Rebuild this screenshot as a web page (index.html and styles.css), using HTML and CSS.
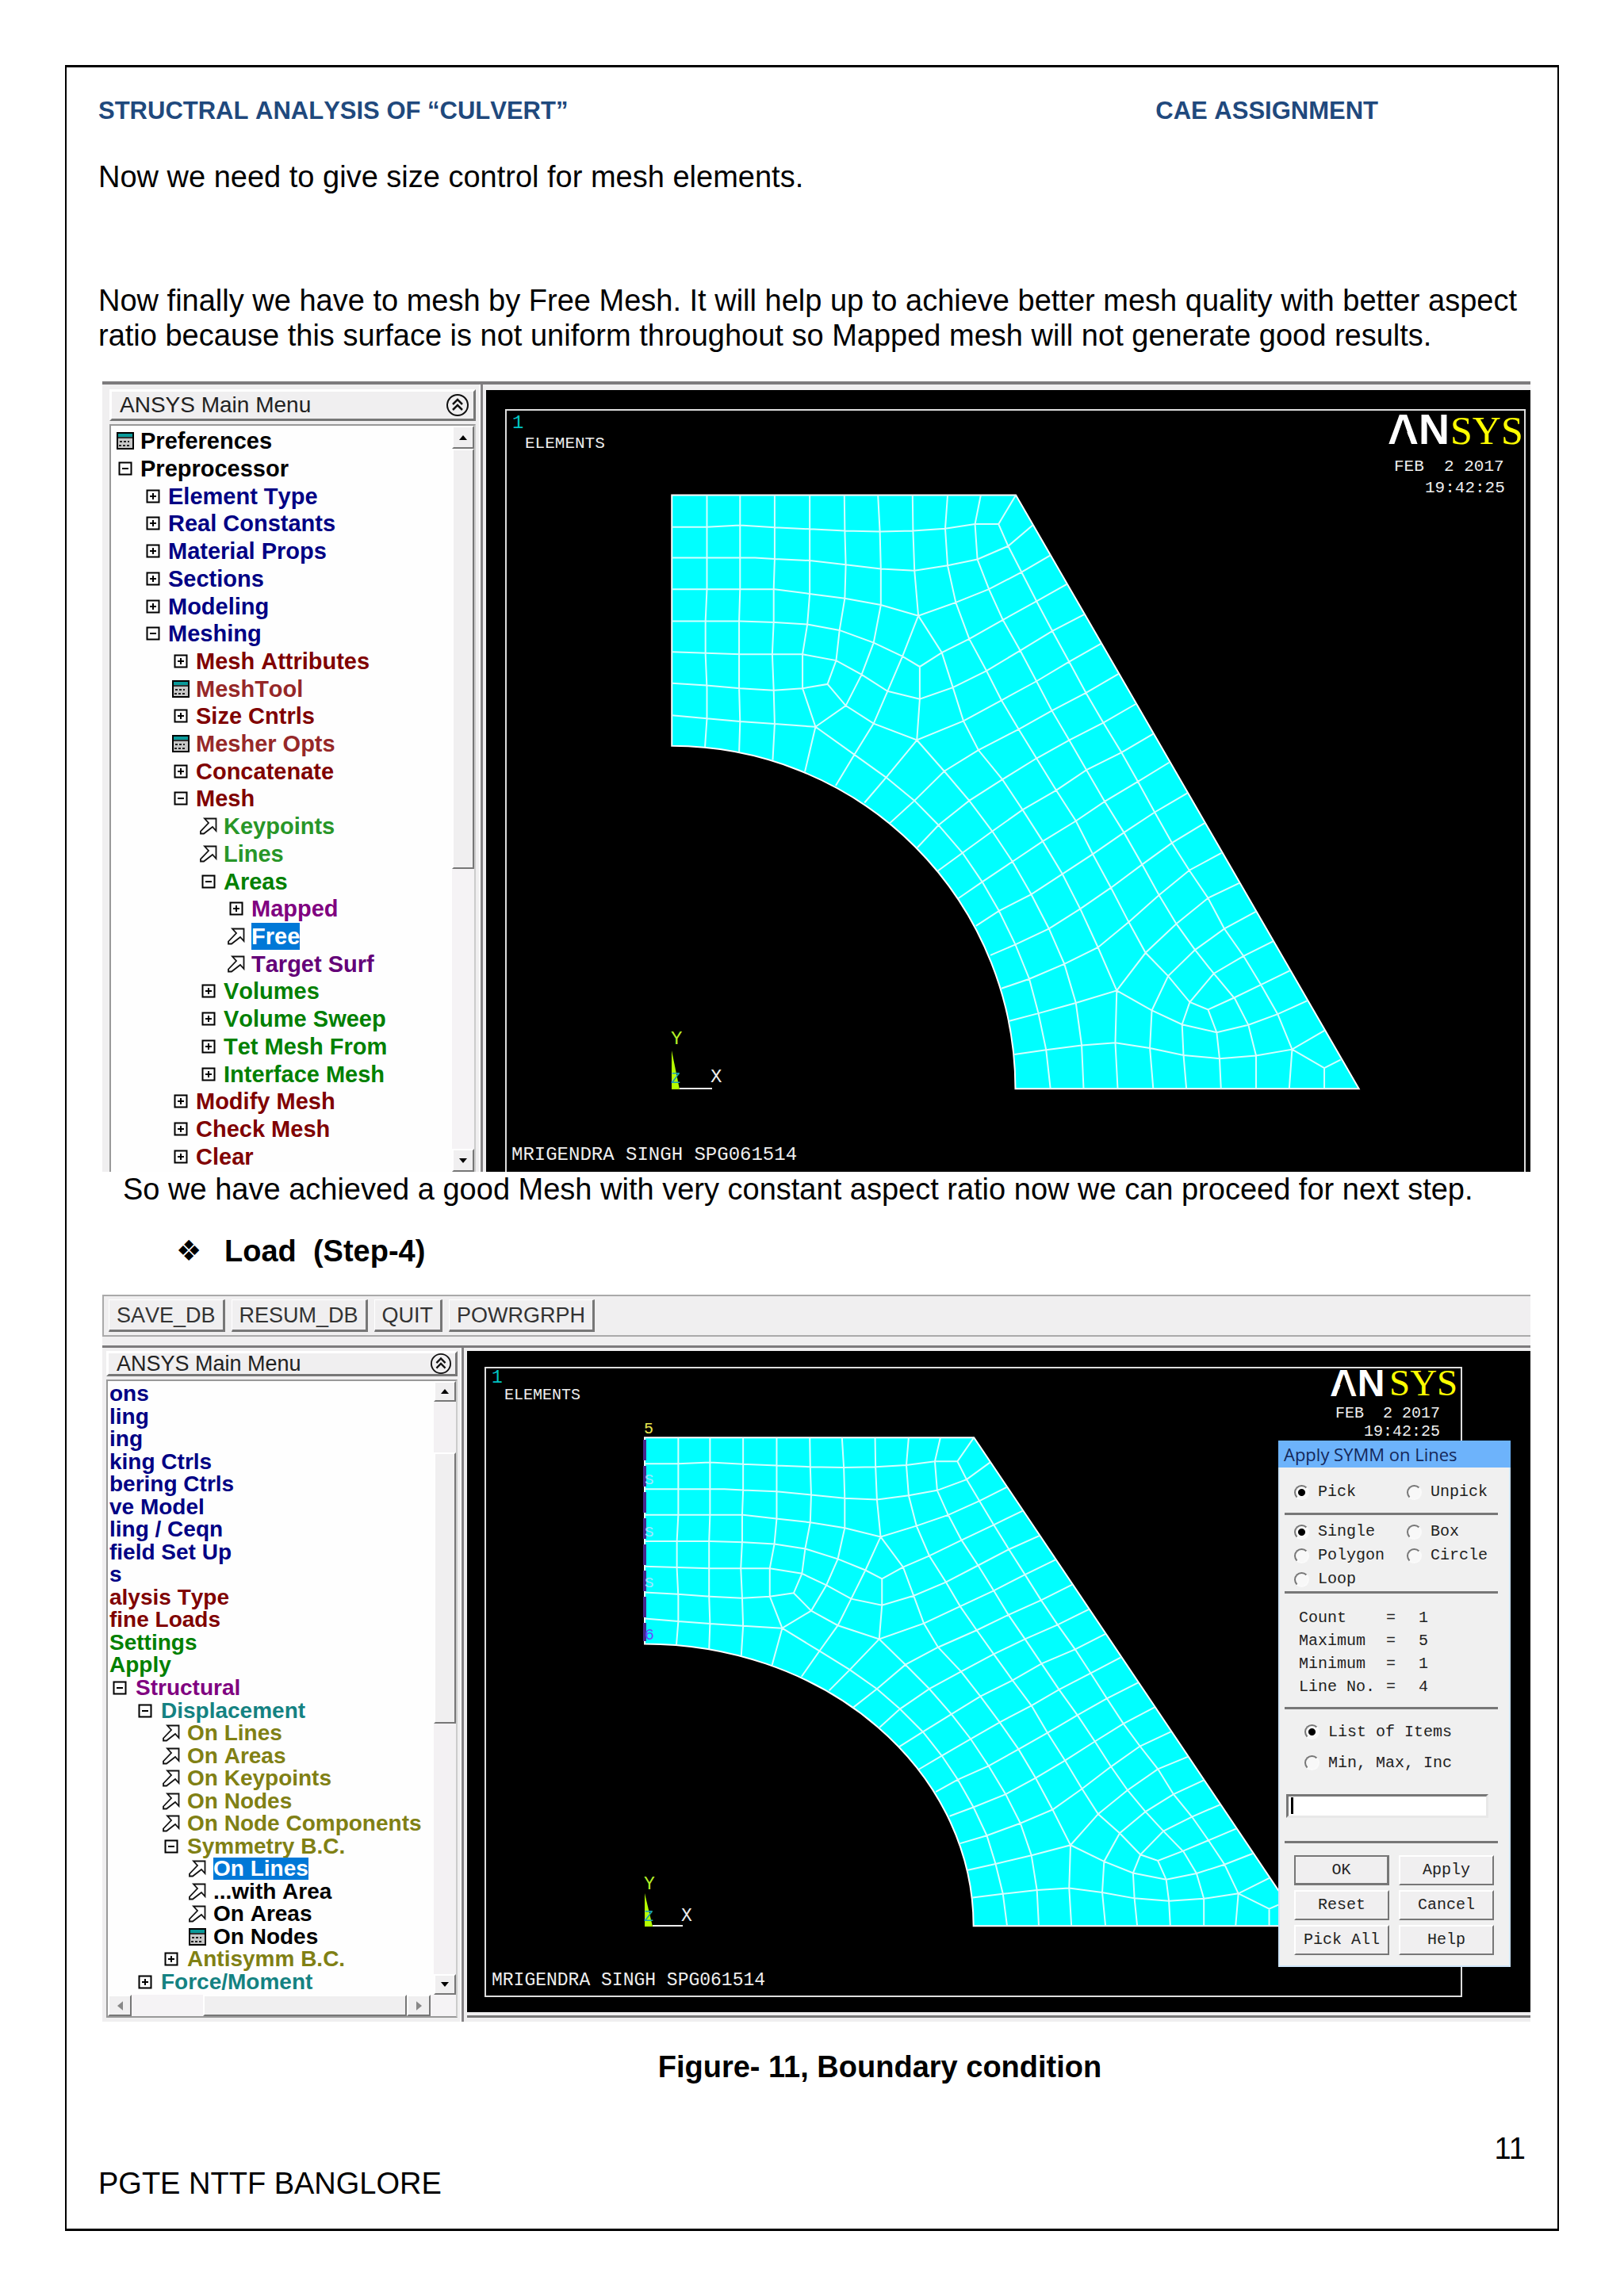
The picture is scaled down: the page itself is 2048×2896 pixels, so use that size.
FILE: index.html
```html
<!DOCTYPE html>
<html lang="en">
<head>
<meta charset="utf-8">
<title>Structral Analysis of “Culvert”</title>
<link rel="stylesheet" href="styles.css">
</head>
<body>
<svg class="sprite" width="0" height="0" aria-hidden="true">
  <symbol id="plus" viewBox="0 0 22 22"><path d="M3.500 3.500h15v15h-15zM7 11h8M11 7v8" fill="none" stroke="#000" stroke-width="2"/></symbol>
  <symbol id="minus" viewBox="0 0 22 22"><path d="M3.500 3.500h15v15h-15zM7 11h8" fill="none" stroke="#000" stroke-width="2"/></symbol>
  <symbol id="arrow" viewBox="0 0 22 22"><path d="M6 1.500H20.500V17L16 12L5 20.500H1V17.500L11 7Z" fill="#fff" stroke="#111" stroke-width="1.800"/></symbol>
  <symbol id="form" viewBox="0 0 22 22"><path d="M1 1h20v20H1z" fill="#c8c8c8" stroke="#000" stroke-width="2"/><path d="M2 2h18v4H2z" fill="#0a9a9a"/><path d="M2 7h18" stroke="#000" stroke-width="1.500"/><path d="M4 12h12M3 17h15" stroke="#222" stroke-width="2" stroke-dasharray="3 2"/></symbol>
  <symbol id="collapse" viewBox="0 0 28 28"><circle cx="14" cy="14" r="13" fill="none" stroke="#111" stroke-width="2"/><path d="M8 13l6-6 6 6M8 20l6-6 6 6" fill="none" stroke="#111" stroke-width="2.500"/></symbol>
  <g id="mesh">
    <path class="mesh-area" d="M78 85H794L1508 1517H793A715 827 0 0 0 78 690Z"/>
    <path class="mesh-line" d="M78 162H151L220 158L292 163L365 167L438 171L511 173L580 171L647 166L709 155H758L794 85
      M78 236H251L292 239L365 243L440 253L513 263L583 267L652 255L714 240L778 208L830 157
      M78 312H292L364 323L438 334L513 350L591 376L669 344L738 312L806 271L866 230
      M78 389H220L292 392L360 397L427 411L498 441L558 474L594 499L640 465L697 432L767 386L837 341L900 300
      M78 463L150 466L220 469H350L420 484L473 518L527 558L594 577L663 549L733 509L803 460L870 413L936 373
      M78 539L150 544L220 551L290 556L350 551L402 541L440 593L498 636L588 676L685 630L764 580L837 534L905 487L972 443
      M78 616L151 624L220 631L292 637L377 644
      M151 85V312L148 389V469L151 551V624L147 692
      M220 85V312L218 389V551L220 631L218 706
      M292 85V239L290 312V389L287 469L290 556L292 637L288 724
      M365 85V323L360 397L350 469V551L377 644L355 752
      M437 85L438 171L440 253L438 334L427 411L420 484L402 541
      M507 85L511 173L513 263V350L498 441L473 518L440 593L377 644
      M579 85L580 171L583 267L591 376L558 474L527 558L498 636L458 711L419 786
      M594 499V577L588 676L524 766L479 827
      M377 644L458 711L524 766L583 822L633 881L683 948L724 1018L759 1088L793 1169L822 1252L841 1335L857 1423L866 1517
      M588 676L645 751L697 822L745 896L787 969L826 1048L863 1131L895 1216L919 1310L931 1412L935 1517
      M591 376L640 465L663 549L685 630L716 700L766 771L808 844L850 920L891 999L928 1083L965 1176L1004 1280L1001 1406L1006 1517
      M652 85L647 166L652 255L669 344L697 432L733 509L764 580L800 650L837 720L878 797L919 871L954 951L992 1032L1029 1115L1064 1189L1111 1245L1156 1308L1194 1326L1249 1297L1304 1266L1364 1232
      M721 85L709 155L714 240L738 312L767 386L803 460L837 534L869 605L905 676L941 748L979 824L1019 899L1057 976L1092 1050L1128 1119L1167 1182L1206 1239L1250 1300L1278 1363L1294 1437V1517
      M758 155L778 208L806 271L837 341L870 413L905 487L940 562L976 634L1014 706L1048 776L1083 850L1119 924L1155 990L1194 1057L1228 1131L1268 1197L1304 1266L1339 1337L1369 1422L1436 1467L1470 1447M1436 1467V1517
      M531 877L583 822L645 751L716 700L800 650L869 605L940 562L1008 516
      M589 935L633 881L697 822L766 771L837 720L905 676L976 634L1045 588
      M631 992L683 948L745 896L808 844L878 797L941 748L1014 706L1080 661
      M674 1058L724 1018L787 969L850 920L919 871L979 824L1048 776L1113 730
      M711 1124L759 1088L826 1048L891 999L954 951L1019 899L1083 850L1151 804
      M741 1195L793 1169L863 1131L928 1083L992 1032L1057 976L1119 924L1187 876
      M764 1275L822 1252L895 1216L965 1176L1029 1115L1092 1050L1155 990L1222 948
      M779 1354L841 1335L919 1310L1004 1280L1064 1189L1128 1119L1194 1057L1259 1021
      M791 1434L857 1423L931 1412L1001 1406L1073 1419L1143 1436L1218 1444L1294 1437L1369 1422L1437 1376
      M1004 1280L1077 1328L1140 1362L1212 1381L1278 1363L1339 1337L1400 1305
      M1080 1517L1073 1419L1077 1328L1111 1245L1167 1182L1228 1131L1295 1089
      M1149 1517L1143 1436L1140 1362L1156 1308L1206 1239L1268 1197L1330 1161
      M1194 1326L1212 1381L1218 1444L1221 1517
      M1369 1422L1363 1517"/>
  </g>
</svg>

<main class="page">
  <header class="page-head"><span>STRUCTRAL ANALYSIS OF “CULVERT”</span><span>CAE ASSIGNMENT</span></header>
  <p class="intro">Now we need to give size control for mesh elements.</p>
  <p>Now finally we have to mesh by Free Mesh. It will help up to achieve better mesh quality with better aspect ratio because this surface is not uniform throughout so Mapped mesh will not generate good results.</p>

  <figure class="shot shot-mesh">
    <div class="workspace">
      <section class="menu">
        <div class="menu-title">ANSYS Main Menu<button class="fold" aria-label="Collapse menu"><svg><use href="#collapse"/></svg></button></div>
        <div class="tree-box">
          <ul class="tree">
            <li class="l0 black"><svg><use href="#form"/></svg><span>Preferences</span></li>
            <li class="l0 black"><svg><use href="#minus"/></svg><span>Preprocessor</span></li>
            <li class="l1 navy"><svg><use href="#plus"/></svg><span>Element Type</span></li>
            <li class="l1 navy"><svg><use href="#plus"/></svg><span>Real Constants</span></li>
            <li class="l1 navy"><svg><use href="#plus"/></svg><span>Material Props</span></li>
            <li class="l1 navy"><svg><use href="#plus"/></svg><span>Sections</span></li>
            <li class="l1 navy"><svg><use href="#plus"/></svg><span>Modeling</span></li>
            <li class="l1 navy"><svg><use href="#minus"/></svg><span>Meshing</span></li>
            <li class="l2 maroon"><svg><use href="#plus"/></svg><span>Mesh Attributes</span></li>
            <li class="l2 brown"><svg><use href="#form"/></svg><span>MeshTool</span></li>
            <li class="l2 maroon"><svg><use href="#plus"/></svg><span>Size Cntrls</span></li>
            <li class="l2 brown"><svg><use href="#form"/></svg><span>Mesher Opts</span></li>
            <li class="l2 maroon"><svg><use href="#plus"/></svg><span>Concatenate</span></li>
            <li class="l2 maroon"><svg><use href="#minus"/></svg><span>Mesh</span></li>
            <li class="l3 leaf"><svg><use href="#arrow"/></svg><span>Keypoints</span></li>
            <li class="l3 leaf"><svg><use href="#arrow"/></svg><span>Lines</span></li>
            <li class="l3 green"><svg><use href="#minus"/></svg><span>Areas</span></li>
            <li class="l4 purple"><svg><use href="#plus"/></svg><span>Mapped</span></li>
            <li class="l4 selected"><svg><use href="#arrow"/></svg><span>Free</span></li>
            <li class="l4 plum"><svg><use href="#arrow"/></svg><span>Target Surf</span></li>
            <li class="l3 green"><svg><use href="#plus"/></svg><span>Volumes</span></li>
            <li class="l3 green"><svg><use href="#plus"/></svg><span>Volume Sweep</span></li>
            <li class="l3 green"><svg><use href="#plus"/></svg><span>Tet Mesh From</span></li>
            <li class="l3 green"><svg><use href="#plus"/></svg><span>Interface Mesh</span></li>
            <li class="l2 maroon"><svg><use href="#plus"/></svg><span>Modify Mesh</span></li>
            <li class="l2 maroon"><svg><use href="#plus"/></svg><span>Check Mesh</span></li>
            <li class="l2 maroon"><svg><use href="#plus"/></svg><span>Clear</span></li>
          </ul>
          <div class="vbar">
            <button class="raised step" aria-label="Scroll up"><svg viewBox="0 0 10 6"><path d="M0 6L5 0L10 6Z"/></svg></button>
            <div class="thumb raised"></div><div class="rest"></div>
            <button class="raised step" aria-label="Scroll down"><svg viewBox="0 0 10 6"><path d="M0 0L5 6L10 0Z"/></svg></button>
          </div>
        </div>
      </section>
      <div class="sash"></div>
      <div class="view">
        <svg class="plot" viewBox="613 492 1317 986">
          <path class="plot-frame" d="M638 1480V517H1923V1480"/>
          <text class="t-one" x="646" y="540">1</text>
          <text class="t-small" x="662" y="565">ELEMENTS</text>
          <text class="logo-an" x="1750" y="560">AN</text>
          <path d="M1758 561L1769 530L1780 561Z"/>
          <text class="logo-sys" x="1829" y="560">SYS</text>
          <text class="t-small" x="1758" y="594" xml:space="preserve">FEB  2 2017</text>
          <text class="t-small" x="1797" y="621">19:42:25</text>
          <use href="#mesh" transform="translate(800 580) scale(.60588 .52295)"/>
          <path class="axis-y" d="M847 1325L857 1374H847Z"/>
          <path class="axis-x" d="M857 1373H898"/>
          <text class="t-y" x="846" y="1317">Y</text>
          <text class="t-z" x="846" y="1366">Z</text>
          <text class="t-big" x="896" y="1365">X</text>
          <text class="t-big" x="645" y="1463">MRIGENDRA SINGH SPG061514</text>
        </svg>
      </div>
    </div>
  </figure>

  <p class="result">So we have achieved a good Mesh with very constant aspect ratio now we can proceed for next step.</p>
  <h2 class="step-title"><span class="bullet">❖</span>Load  (Step-4)</h2>

  <figure class="shot shot-load">
    <div class="toolbar">
      <button class="raised">SAVE_DB</button><button class="raised">RESUM_DB</button><button class="raised">QUIT</button><button class="raised">POWRGRPH</button>
    </div>
    <div class="workspace">
      <section class="menu">
        <div class="menu-title">ANSYS Main Menu<button class="fold" aria-label="Collapse menu"><svg><use href="#collapse"/></svg></button></div>
        <div class="tree-box">
          <ul class="tree">
            <li class="l0 navy"><span>ons</span></li>
            <li class="l0 navy"><span>ling</span></li>
            <li class="l0 navy"><span>ing</span></li>
            <li class="l0 navy"><span>king Ctrls</span></li>
            <li class="l0 navy"><span>bering Ctrls</span></li>
            <li class="l0 navy"><span>ve Model</span></li>
            <li class="l0 navy"><span>ling / Ceqn</span></li>
            <li class="l0 navy"><span>field Set Up</span></li>
            <li class="l0 navy"><span>s</span></li>
            <li class="l0 maroon"><span>alysis Type</span></li>
            <li class="l0 maroon"><span>fine Loads</span></li>
            <li class="l0 green"><span>Settings</span></li>
            <li class="l0 green"><span>Apply</span></li>
            <li class="l1 purple"><svg><use href="#minus"/></svg><span>Structural</span></li>
            <li class="l2 teal"><svg><use href="#minus"/></svg><span>Displacement</span></li>
            <li class="l3 olive"><svg><use href="#arrow"/></svg><span>On Lines</span></li>
            <li class="l3 olive"><svg><use href="#arrow"/></svg><span>On Areas</span></li>
            <li class="l3 olive"><svg><use href="#arrow"/></svg><span>On Keypoints</span></li>
            <li class="l3 olive"><svg><use href="#arrow"/></svg><span>On Nodes</span></li>
            <li class="l3 olive"><svg><use href="#arrow"/></svg><span>On Node Components</span></li>
            <li class="l3 olive"><svg><use href="#minus"/></svg><span>Symmetry B.C.</span></li>
            <li class="l4 selected"><svg><use href="#arrow"/></svg><span>On Lines</span></li>
            <li class="l4 black"><svg><use href="#arrow"/></svg><span>...with Area</span></li>
            <li class="l4 black"><svg><use href="#arrow"/></svg><span>On Areas</span></li>
            <li class="l4 black"><svg><use href="#form"/></svg><span>On Nodes</span></li>
            <li class="l3 olive"><svg><use href="#plus"/></svg><span>Antisymm B.C.</span></li>
            <li class="l2 teal"><svg><use href="#plus"/></svg><span>Force/Moment</span></li>
          </ul>
          <div class="vbar">
            <button class="raised step" aria-label="Scroll up"><svg viewBox="0 0 10 6"><path d="M0 6L5 0L10 6Z"/></svg></button>
            <div class="lead"></div><div class="thumb raised"></div><div class="rest"></div>
            <button class="raised step" aria-label="Scroll down"><svg viewBox="0 0 10 6"><path d="M0 0L5 6L10 0Z"/></svg></button>
          </div>
          <div class="hbar">
            <button class="raised step" aria-label="Scroll left"><svg viewBox="0 0 6 10"><path d="M6 0L0 5L6 10Z"/></svg></button>
            <div class="lead"></div><div class="thumb raised"></div>
            <button class="raised step" aria-label="Scroll right"><svg viewBox="0 0 6 10"><path d="M0 0L6 5L0 10Z"/></svg></button>
          </div>
        </div>
      </section>
      <div class="sash"></div>
      <div class="view">
        <svg class="plot" viewBox="589 1704 1341 834">
          <path class="plot-frame" d="M612 1725H1843V2518H612Z"/>
          <text class="t-one" x="620" y="1744">1</text>
          <text class="t-small" x="636" y="1765">ELEMENTS</text>
          <text class="logo-an" x="1677" y="1761">AN</text>
          <path d="M1685 1762L1695 1734L1705 1762Z"/>
          <text class="logo-sys" x="1752" y="1760">SYS</text>
          <text class="t-small" x="1684" y="1788" xml:space="preserve">FEB  2 2017</text>
          <text class="t-small" x="1720" y="1811">19:42:25</text>
          <use href="#mesh" transform="translate(767.8 1776.6) scale(.5799 .4302)"/>
          <path class="edge" d="M813 1816V2070"/>
          <text class="t-yellow" x="812" y="1808">5</text>
          <text class="t-s" x="813" y="1872">S</text>
          <text class="t-s" x="813" y="1938">S</text>
          <text class="t-s" x="813" y="2002">S</text>
          <text class="t-six" x="813" y="2068">6</text>
          <path class="axis-y" d="M813 2388L823 2430H813Z"/>
          <path class="axis-x" d="M823 2429H861"/>
          <text class="t-y" x="812" y="2383">Y</text>
          <text class="t-z" x="812" y="2423">Z</text>
          <text class="t-big" x="859" y="2423">X</text>
          <text class="t-big" x="620" y="2504">MRIGENDRA SINGH SPG061514</text>
        </svg>
        <form class="dialog">
          <h3 class="dialog-title">Apply SYMM on Lines</h3>
          <div class="dialog-body">
            <div class="radios mode">
              <label><input type="radio" name="mode" checked>Pick</label>
              <label><input type="radio" name="mode">Unpick</label>
            </div>
            <hr>
            <div class="radios shape">
              <label><input type="radio" name="shape" checked>Single</label>
              <label><input type="radio" name="shape">Box</label>
              <label><input type="radio" name="shape">Polygon</label>
              <label><input type="radio" name="shape">Circle</label>
              <label><input type="radio" name="shape">Loop</label>
            </div>
            <hr>
            <table>
              <tr><th scope="row">Count</th><td>=</td><td>1</td></tr>
              <tr><th scope="row">Maximum</th><td>=</td><td>5</td></tr>
              <tr><th scope="row">Minimum</th><td>=</td><td>1</td></tr>
              <tr><th scope="row">Line No.</th><td>=</td><td>4</td></tr>
            </table>
            <hr>
            <div class="entry">
              <label><input type="radio" name="entry" checked>List of Items</label>
              <label><input type="radio" name="entry">Min, Max, Inc</label>
            </div>
            <input class="items" type="text" aria-label="List of Items">
            <hr>
            <div class="actions">
              <button type="button" class="raised default">OK</button>
              <button type="button" class="raised">Apply</button>
              <button type="button" class="raised">Reset</button>
              <button type="button" class="raised">Cancel</button>
              <button type="button" class="raised">Pick All</button>
              <button type="button" class="raised">Help</button>
            </div>
          </div>
        </form>
      </div>
    </div>
    <figcaption>Figure- 11, Boundary condition</figcaption>
  </figure>

  <footer><span class="number">11</span><span>PGTE NTTF BANGLORE</span></footer>
</main>
</body>
</html>
```
FILE: styles.css
```css
* { box-sizing: border-box; }
body {
  margin: 0;
  padding: 82px;
  background: #fff;
  color: #000;
  font: 38px/44px "Liberation Sans", Arial, sans-serif;
}
.sprite { position: absolute; }
p, h2, h3, ul, figure, form { margin: 0; padding: 0; }
button, input { font: inherit; color: inherit; margin: 0; padding: 0; }

.page {
  border: solid #000;
  border-width: 3px 2px;
  padding: 37px 34px 35px 40px;
}
.page-head {
  display: flex;
  justify-content: space-between;
  padding-right: 192px;
  color: #1f497d;
  font-size: 31px;
  line-height: 36px;
  font-weight: bold;
}
.page-head, .menu, .toolbar { font-kerning: none; }
.intro { margin: 43px 0 112px; }
.result { padding-left: 31px; }
.step-title {
  display: flex;
  margin-top: 34px;
  padding-left: 98px;
  font-size: 38px;
  white-space: pre;
}
.bullet { width: 61px; font-family: "DejaVu Sans", sans-serif; font-size: 36px; font-weight: normal; }
footer { display: flex; flex-direction: column; margin-top: 59px; }
.number { align-self: flex-end; padding-right: 6px; }

/* Application windows */
.shot { margin-left: 5px; }
.shot-mesh { margin-top: 36px; }
.shot-load { margin-top: 33px; }
.workspace { display: grid; background: #f0eff0; }
.shot-mesh .workspace {
  grid-template-columns: 475px 9px minmax(0, 1fr);
  border-top: 4px solid #7d7b7d;
}
.shot-load .workspace {
  grid-template-columns: 451px 9px minmax(0, 1fr);
  border-top: 3px solid #7d7b7d;
}
.sash { background: linear-gradient(to right, #fff 0 2px, #858385 2px 5px, #f0eff0 5px 9px); }
.raised {
  border: 2px solid;
  border-color: #fff #777 #777 #fff;
  background: #f0eff0;
}

.menu { display: flex; flex-direction: column; min-width: 0; gap: 4px; }
.shot-mesh .menu { padding: 6px 4px 0 9px; }
.shot-load .menu { padding: 4px 3px 5px 5px; }
.menu-title {
  display: flex;
  justify-content: space-between;
  align-items: center;
  border: 3px solid;
  border-color: #fff #777 #777 #fff;
  color: #222;
}
.shot-mesh .menu-title { height: 40px; padding: 0 6px 0 10px; font-size: 28px; }
.shot-load .menu-title { height: 32px; padding: 0 5px 0 10px; font-size: 27px; }
.fold { display: flex; border: 0; background: none; }
.fold svg { width: 28px; height: 28px; }
.shot-load .fold svg { width: 26px; height: 26px; }

.tree-box {
  flex: 1;
  display: grid;
  grid-template-columns: minmax(0, 1fr) 28px;
  border: 2px solid #999;
  border-right-color: #ccc;
  background: #fefefe;
}
.shot-mesh .tree-box { border-bottom: 0; }
.tree {
  display: grid;
  grid-auto-rows: 1fr;
  list-style: none;
  font-weight: bold;
  white-space: nowrap;
}
.tree li { display: flex; align-items: center; }
.tree svg { flex: none; width: 22px; height: 22px; margin: 0 8px 0 2px; }
.shot-mesh .tree { padding: 2px 0; font-size: 29px; line-height: 34px; }
.shot-mesh .l0 { padding-left: 5px; }
.shot-mesh .l1 { padding-left: 40px; }
.shot-mesh .l2 { padding-left: 75px; }
.shot-mesh .l3 { padding-left: 110px; }
.shot-mesh .l4 { padding-left: 145px; }
.shot-load .tree { padding: 2px 0; font-size: 28px; line-height: 28px; }
.shot-load .tree svg { margin: 0 9px 0 1px; }
.shot-load .l0 { padding-left: 2px; }
.shot-load .l1 { padding-left: 3px; }
.shot-load .l2 { padding-left: 35px; }
.shot-load .l3 { padding-left: 68px; }
.shot-load .l4 { padding-left: 101px; }
.navy { color: #000084; }
.maroon { color: #800000; }
.brown { color: #962828; }
.green { color: #008000; }
.leaf { color: #289628; }
.purple { color: #800080; }
.plum { color: #640078; }
.teal { color: #148282; }
.olive { color: #808014; }
.selected span { background: #0078d7; color: #fff; }

.vbar, .hbar { display: flex; background: #f5f3f5; }
.vbar { flex-direction: column; }
.step { display: grid; place-items: center; flex: none; }
.vbar .step { height: 29px; }
.vbar .step svg { width: 10px; height: 6px; }
.hbar .step { width: 30px; }
.hbar .step svg { width: 7px; height: 12px; fill: #888; }
.shot-mesh .vbar .thumb { flex: 527; }
.shot-mesh .vbar .rest { flex: 354; }
.shot-load .vbar { background: #f3f1f3; }
.shot-load .vbar .step { height: 26px; }
.shot-load .vbar .lead { flex: 64; }
.shot-load .vbar .thumb { flex: 341; }
.shot-load .vbar .rest { flex: 318; }
.shot-load .tree-box { grid-template-rows: 1fr 27px; }
.hbar { grid-column: 1 / -1; padding-right: 32px; }
.hbar .lead { flex: 91; }
.hbar .thumb { flex: 254; }

/* Graphics area */
.view { position: relative; }
.shot-mesh .view { padding-top: 7px; }
.shot-load .view { padding-top: 4px; padding-bottom: 12px; }
.shot-load .view::after {
  content: "";
  position: absolute;
  left: 0;
  right: 0;
  bottom: 5px;
  height: 3px;
  background: #777;
}
.plot { display: block; width: 100%; height: auto; background: #000; font-family: "Liberation Mono", monospace; }
.plot-frame { fill: none; stroke: #ddd; stroke-width: 2; }
.mesh-area { fill: #0ff; stroke: #fff; stroke-width: 2; vector-effect: non-scaling-stroke; }
.mesh-line { fill: none; stroke: #d4ffff; stroke-width: 2; vector-effect: non-scaling-stroke; }
.plot text { fill: #eee; }
.t-small { font-size: 21px; }
.t-big, .t-one, .t-y, .t-z { font-size: 24px; }
.shot-load .t-small { font-size: 20px; }
.shot-load .t-big, .shot-load .t-one, .shot-load .t-y, .shot-load .t-z { font-size: 23px; }
.plot .t-one { fill: #00c4c4; }
.plot .t-y { fill: #b4f028; }
.plot .t-z { fill: #1ea0b4; font-size: 20px; }
.plot .t-yellow { fill: #e6e650; font-size: 20px; }
.plot .t-s { fill: #a0e6ff; font-size: 19px; }
.plot .t-six { fill: #6450ff; font-size: 20px; }
.edge { stroke: #46288c; stroke-width: 4; stroke-dasharray: 26 7; }
.axis-y { fill: #b4ff00; }
.axis-x { stroke: #eee; stroke-width: 2; }
.plot .logo-an { fill: #fff; font: bold 54px "Liberation Sans", sans-serif; }
.plot .logo-sys { fill: #ff0; font: 50px "Liberation Serif", serif; }
.shot-load .plot .logo-an { font-size: 48px; }
.shot-load .plot .logo-sys { font-size: 47px; }

/* Toolbar */
.toolbar {
  display: flex;
  gap: 8px;
  height: 53px;
  margin-bottom: 11px;
  padding: 4px 6px;
  border: 2px solid #aaa;
  border-right: 0;
  background: #f0eff0;
  box-shadow: 0 11px #f0eff0;
  color: #333;
  font-size: 27px;
  line-height: 36px;
}
.toolbar .raised { padding: 0 9px; border-width: 1px 3px 3px 1px; }

/* Picking dialog */
.dialog {
  position: absolute;
  top: 117px;
  right: 25px;
  width: 293px;
  border: 2px solid #cfe6fa;
  border-top: 0;
  background: #f0f0f0;
  color: #222;
  font: 20px/24px "Liberation Mono", monospace;
}
.dialog-title {
  margin: 0 -2px;
  padding-left: 7px;
  background: #6db3fb;
  color: #14285a;
  font: 22px/34px "Open Sans", sans-serif;
}
.dialog-body { padding: 15px 14px 13px 6px; }
.dialog hr { height: 3px; margin: 0; border: 0; background: #777; }
.dialog label { display: flex; align-items: center; gap: 11px; white-space: nowrap; }
.dialog input[type="radio"] {
  appearance: none;
  flex: none;
  width: 19px;
  height: 19px;
  border: 2px solid;
  border-color: #777 #fafafa #fafafa #777;
  border-radius: 50%;
  background: #f8f8f8;
}
.dialog input[type="radio"]:checked { background: radial-gradient(circle, #000 0 4px, #f8f8f8 5px); }
.radios { display: grid; grid-template-columns: 142px 1fr; padding-left: 12px; }
.mode { grid-auto-rows: 32px; padding-bottom: 10px; }
.shape { grid-auto-rows: 30px; }
.dialog hr:nth-of-type(1) { margin-bottom: 6px; }
.dialog table { width: 182px; margin: 16px 0 11px 18px; border-collapse: collapse; table-layout: fixed; }
.dialog th { width: 110px; padding: 0; text-align: left; font-weight: normal; line-height: 29px; }
.dialog td { padding: 0; }
.dialog td:nth-child(2) { width: 41px; }
.entry { display: grid; grid-auto-rows: 39px; margin: 9px 0 20px; padding-left: 25px; }
.items {
  display: block;
  width: 255px;
  height: 30px;
  margin: 0 0 29px 2px;
  border: 3px solid;
  border-color: #777 #e8e8e8 #e8e8e8 #777;
  background: linear-gradient(#000, #000) no-repeat 3px 1px / 3px 21px, #fff;
}
.actions {
  display: grid;
  grid-template-columns: 1fr 1fr;
  grid-auto-rows: 38px;
  gap: 6px 12px;
  padding: 15px 5px 0 12px;
}
.actions .default { border: 3px solid #777; border-left-width: 2px; border-top-width: 2px; }

figcaption { margin-top: 35px; padding-left: 160px; text-align: center; font-weight: bold; }
```
